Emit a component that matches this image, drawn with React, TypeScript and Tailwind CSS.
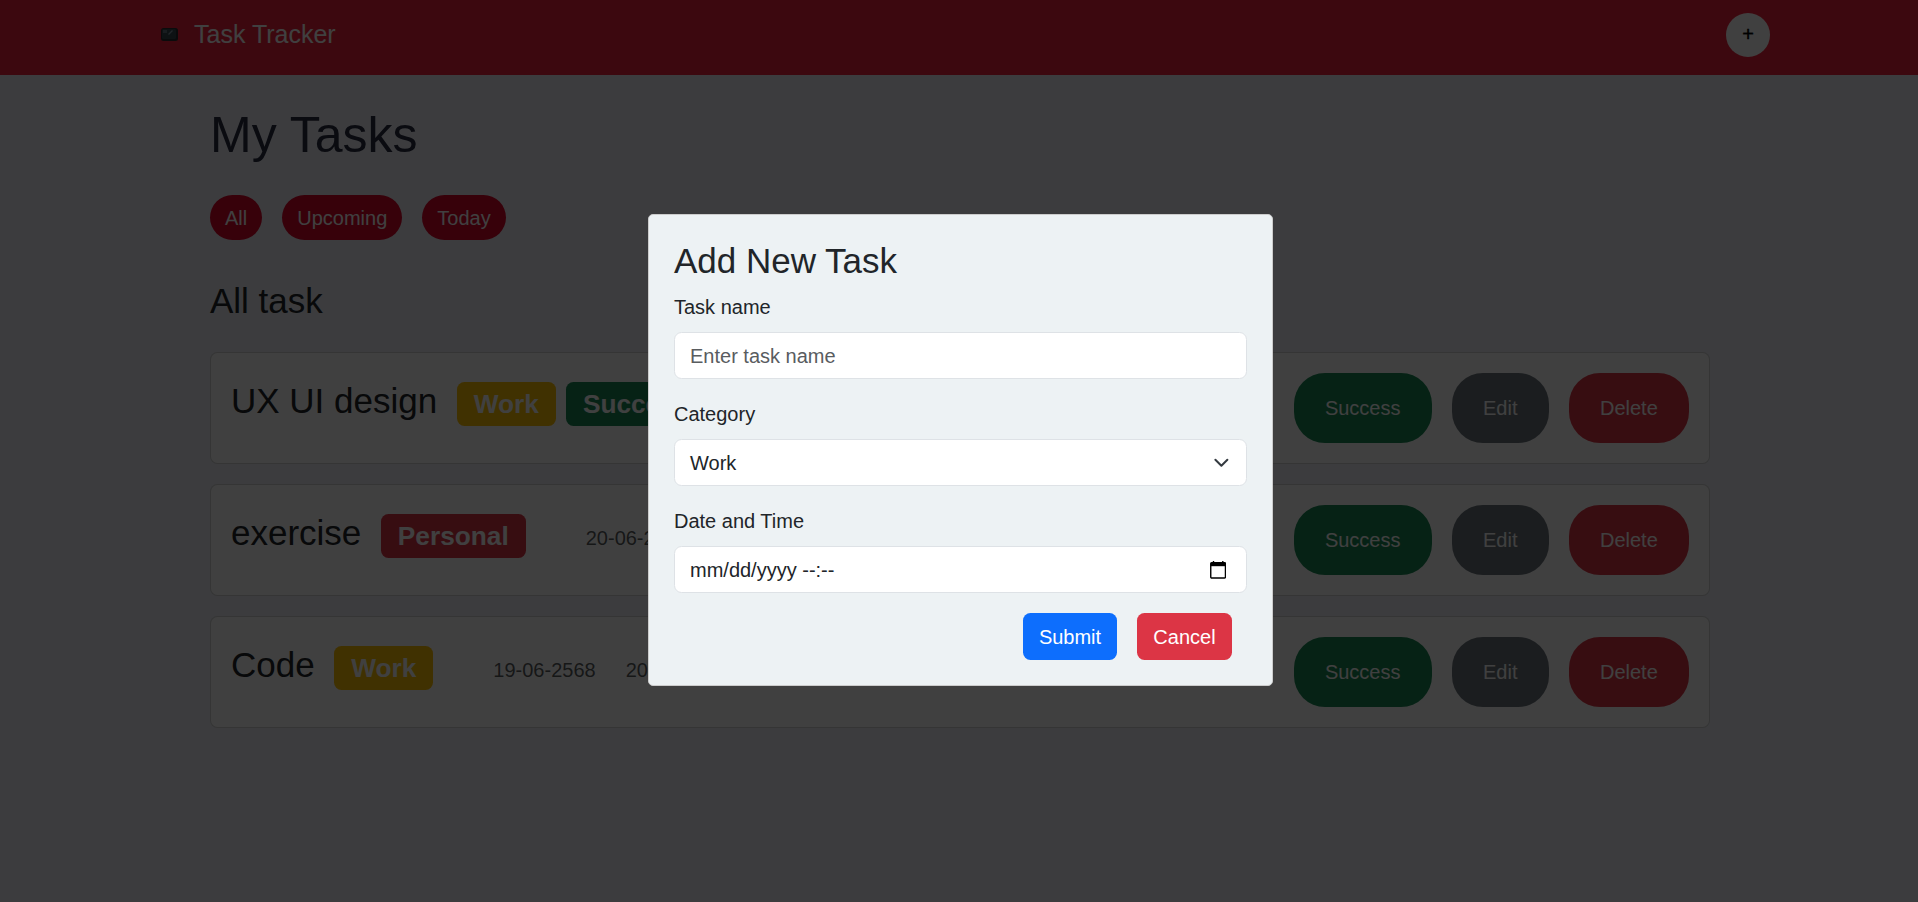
import React from "react";

type Category = "Work" | "Personal";

interface Task {
  name: string;
  category: Category;
  done?: boolean;
  date?: string;
  time?: string;
}

const tasks: Task[] = [
  { name: "UX UI design", category: "Work", done: true },
  { name: "exercise", category: "Personal", date: "20-06-2568" },
  { name: "Code", category: "Work", date: "19-06-2568", time: "20:00" },
];

const categoryColors: Record<Category, string> = {
  Work: "bg-[#ffc107]",
  Personal: "bg-[#dc3545]",
};

function Badge({ color, children }: { color: string; children: React.ReactNode }) {
  return (
    <span
      className={`${color} rounded-[7.5px] px-[17px] py-[9px] text-[26.25px] leading-[26.25px] font-bold text-white`}
    >
      {children}
    </span>
  );
}

function ActionButton({ color, children }: { color: string; children: React.ReactNode }) {
  return (
    <button className={`${color} h-[70px] rounded-[31px] px-[31.25px] text-[20px] text-white`}>
      {children}
    </button>
  );
}

function TaskCard({ task }: { task: Task }) {
  return (
    <div className="flex h-[112px] items-start justify-between rounded-[7.5px] border border-black/[.175] bg-white p-5">
      <div className="flex items-baseline pt-[7px]">
        <h3 className="mr-[19.5px] text-[35px] leading-[42px]">{task.name}</h3>
        <div className="flex items-baseline gap-2.5">
          <Badge color={categoryColors[task.category]}>{task.category}</Badge>
          {task.done && <Badge color="bg-[#198754]">Success</Badge>}
        </div>
        <div className="ml-[60px] flex gap-[30px] text-[20px] text-[#212529]/75">
          {task.date && <span>{task.date}</span>}
          {task.time && <span>{task.time}</span>}
        </div>
      </div>
      <div className="flex gap-5">
        <ActionButton color="bg-[#198754]">Success</ActionButton>
        <ActionButton color="bg-[#6c757d]">Edit</ActionButton>
        <ActionButton color="bg-[#dc3545]">Delete</ActionButton>
      </div>
    </div>
  );
}

function Logo() {
  return (
    <svg className="h-[13px] w-[17px]" viewBox="0 0 17 13" fill="none">
      <rect width="17" height="13" rx="2.5" fill="#292f33" />
      <rect x="1" y="1" width="14" height="10" rx="1.5" fill="#3b4a52" />
      <rect x="2" y="2" width="4" height="3" fill="#66757f" />
      <path d="M7.5 6.5 11.5 2.5" stroke="#8899a6" strokeWidth="1.3" />
      <path d="M3 9h10" stroke="#37444b" />
    </svg>
  );
}

function Field({ label, children }: { label: string; children: React.ReactNode }) {
  return (
    <div className="mb-5 flex flex-col gap-2.5">
      <span>{label}</span>
      <div className="flex h-[47px] items-center justify-between rounded-[7.5px] border border-[#dee2e6] bg-white px-[15px]">
        {children}
      </div>
    </div>
  );
}

function AddTaskModal() {
  return (
    <div className="fixed inset-0 flex items-center justify-center bg-black/75 pb-[2px] pl-[3px]">
      <div className="h-[472px] w-[625px] rounded-[5px] border border-[#cccccc] bg-[#edf2f4] p-[25px]">
        <h3 className="mb-2.5 text-[35px] leading-[42px]">Add New Task</h3>
        <Field label="Task name">
          <span className="text-[#595c5f]">Enter task name</span>
        </Field>
        <Field label="Category">
          <span>Work</span>
          <svg className="mr-[0.5px] size-[20px]" viewBox="0 0 16 16" fill="none">
            <path
              d="m2 5 6 6 6-6"
              stroke="#343a40"
              strokeWidth="2"
              strokeLinecap="round"
              strokeLinejoin="round"
              transform="translate(1.9 1.4) scale(.8)"
            />
          </svg>
        </Field>
        <Field label="Date and Time">
          <span>mm/dd/yyyy --:--</span>
          <svg className="mr-[5px] h-[18px] w-[16px]" viewBox="0 0 16 18" fill="none">
            <path d="M3.5 0v3M12.8 0v3" stroke="#000" strokeWidth="1.4" />
            <rect x="0.75" y="1.7" width="14.7" height="15.3" rx="1" stroke="#000" strokeWidth="1.4" />
            <path d="M.8 1.5h14.6v3.7H.8z" fill="#000" />
          </svg>
        </Field>
        <div className="mr-[15px] flex justify-end gap-5 text-white">
          <button className="h-[47px] w-[94px] rounded-[7.5px] bg-[#0d6efd]">Submit</button>
          <button className="h-[47px] w-[95px] rounded-[7.5px] bg-[#dc3545]">Cancel</button>
        </div>
      </div>
    </div>
  );
}

export default function App() {
  return (
    <div className="h-[902px] overflow-hidden bg-[#edf0f7] font-['Liberation_Sans',Arial,sans-serif] text-[20px] leading-[30px] text-[#212529]">
      <nav className="flex h-[75px] items-start justify-between bg-[#ef233c] pt-[13px] pr-[148px] pl-[161px]">
        <div className="flex h-[42px] items-center gap-4">
          <Logo />
          <span className="pb-px text-[25px] text-white">Task Tracker</span>
        </div>
        <button className="size-[44px] rounded-full bg-white pb-[2px] text-[20px] text-black [-webkit-text-stroke:0.4px_black]">
          +
        </button>
      </nav>
      <main className="ml-[210px] w-[1500px] pt-[30px]">
        <h1 className="text-[50px] leading-[60px] text-[#2b2d42]">My Tasks</h1>
        <div className="mt-[30px] flex gap-5 text-white">
          <button className="h-[45px] rounded-full bg-[#d90429] px-[15px]">All</button>
          <button className="h-[45px] rounded-full bg-[#d90429] px-[15px]">Upcoming</button>
          <button className="h-[45px] rounded-full bg-[#d90429] px-[15px]">Today</button>
        </div>
        <h3 className="mt-10 text-[35px] leading-[42px]">All task</h3>
        <div className="mt-[30px] flex flex-col gap-5">
          {tasks.map((task) => (
            <TaskCard key={task.name} task={task} />
          ))}
        </div>
      </main>
      <AddTaskModal />
    </div>
  );
}
